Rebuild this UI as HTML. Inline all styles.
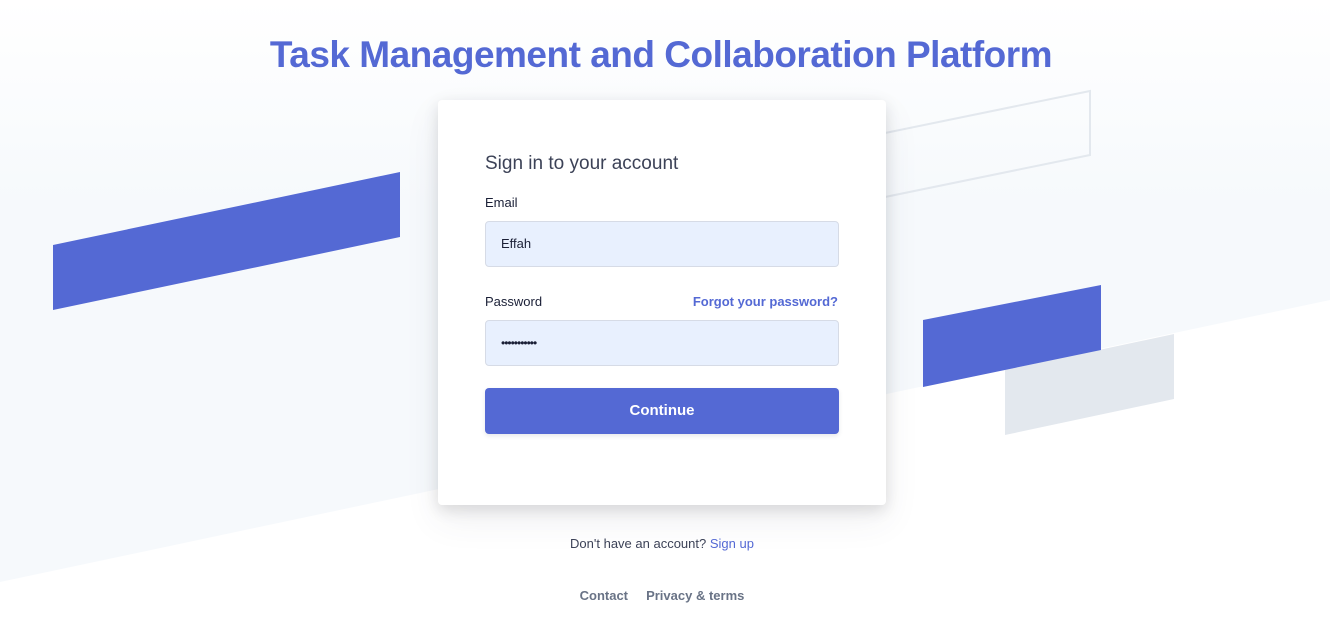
<!DOCTYPE html>
<html><head><meta charset="utf-8"><style>
html,body{margin:0;width:1330px;height:622px;overflow:hidden;background:#fff;font-family:"Liberation Sans","DejaVu Sans",sans-serif;}
svg.bg{position:absolute;left:0;top:0}
h1{position:absolute;left:0;width:1322px;top:34px;margin:0;text-align:center;font-size:37px;font-weight:600;color:#5469d4;letter-spacing:-0.5px}
.card{position:absolute;left:438px;top:100px;width:448px;height:405px;background:#fff;border-radius:4px;box-shadow:0 15px 35px rgba(60,66,87,.08),0 5px 15px rgba(0,0,0,.12)}
.t{position:absolute;left:47px;top:53px;font-size:19px;color:#3c4257}
.lbl{position:absolute;left:47px;font-size:13px;color:#1a1f36;font-weight:500}
.fg{position:absolute;right:48px;top:194px;font-size:13px;color:#5469d4;font-weight:600}
.in{position:absolute;left:47px;width:354px;height:46px;background:#e8f0fe;border:1px solid #d6dbe6;border-radius:4px;font-size:13px;color:#1a1f36;line-height:44px;box-sizing:border-box;padding-left:15px}
.btn{position:absolute;left:47px;top:288px;width:354px;height:46px;background:#5469d4;border-radius:4px;color:#fff;font-size:15px;font-weight:600;text-align:center;line-height:46px;box-shadow:0 2px 4px rgba(60,66,87,.12)}
.su{position:absolute;left:0;width:1324px;top:536px;text-align:center;font-size:13px;color:#3c4257}
.su span{color:#5469d4}
.ft{position:absolute;left:0;width:1324px;top:588px;text-align:center;font-size:13px;color:#697386;font-weight:600}
</style></head><body>
<svg class="bg" width="1330" height="622">
<defs><linearGradient id="g" x1="0" y1="0" x2="0" y2="1"><stop offset="0" stop-color="#fff"/><stop offset="0.35" stop-color="#f6f9fc"/><stop offset="1" stop-color="#f6f9fc"/></linearGradient></defs>
<polygon points="0,0 1330,0 1330,300 0,582" fill="url(#g)"/>
<polygon points="53,245 400,172 400,237 53,310" fill="#5469d4"/>
<polygon points="885,133 1090,91 1090,155 885,197" fill="none" stroke="#e3e8ee" stroke-width="2"/>
<polygon points="1005,370 1174,334 1174,399 1005,435" fill="#e3e8ee"/>
<polygon points="923,320 1101,285 1101,350 923,387" fill="#5469d4"/>
</svg>
<h1>Task Management and Collaboration Platform</h1>
<div class="card">
<div class="t">Sign in to your account</div>
<div class="lbl" style="top:95px">Email</div>
<div class="in" style="top:121px">Effah</div>
<div class="lbl" style="top:194px">Password</div>
<div class="fg">Forgot your password?</div>
<div class="in" style="top:220px;font-size:12px;letter-spacing:-1px">•••••••••••</div>
<div class="btn">Continue</div>
</div>
<div class="su">Don't have an account? <span>Sign up</span></div>
<div class="ft">Contact&nbsp;&nbsp;&nbsp;&nbsp;&nbsp;Privacy &amp; terms</div>
</body></html>
